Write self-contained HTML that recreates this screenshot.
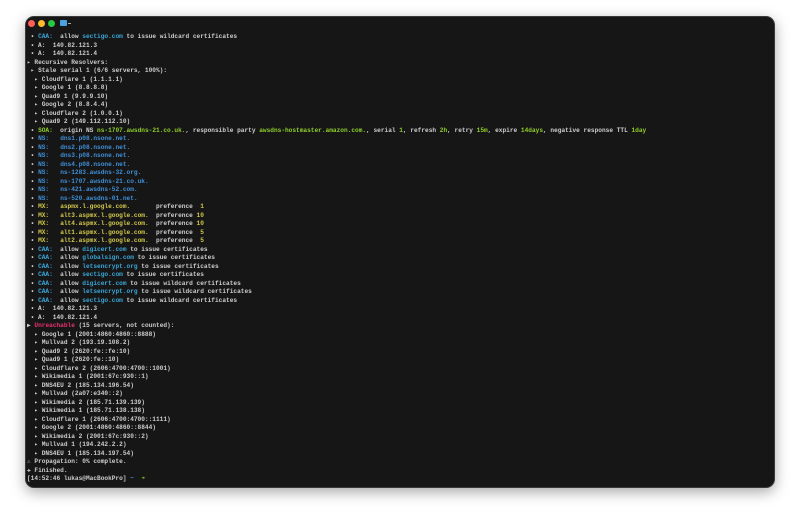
<!DOCTYPE html>
<html><head><meta charset="utf-8"><style>
html,body{margin:0;padding:0;background:#fff;width:800px;height:520px;overflow:hidden}
.win{position:absolute;left:25px;top:16px;width:750px;height:472px;background:#161616;border-radius:9px;box-shadow:0 4px 14px rgba(0,0,0,.35);border:1px solid #3a3a3a;box-sizing:border-box}
.dot{position:absolute;top:3px;width:7px;height:7px;border-radius:50%}
pre{position:absolute;left:1px;top:16px;margin:0;font-family:"Liberation Mono","DejaVu Sans Mono",monospace;font-size:6.15px;line-height:8.5px;color:#cdcdcd;font-weight:bold;white-space:pre}
.b{color:#3f8fd6}.c{color:#3aa6d8}.g{color:#8fcf2a}.y{color:#d2c84a}.p{color:#e8306c}.d{color:#9a9a9a}
</style></head><body>
<div class="win">
<div class="dot" style="left:2px;background:#fe5f57"></div>
<div class="dot" style="left:12px;background:#febc2e"></div>
<div class="dot" style="left:22px;background:#28c840"></div>
<div style="position:absolute;left:34px;top:3px;width:7px;height:6px;background:#4aa3e0;border-radius:1px"></div>
<div style="position:absolute;left:42px;top:6px;width:3px;height:1px;background:#aaa"></div>
<pre> • <span class="c">CAA:</span>  allow <span class="c">sectigo.com</span> to issue wildcard certificates
 • A:  140.82.121.3
 • A:  140.82.121.4
▸ Recursive Resolvers:
 ▸ Stale serial 1 (6/6 servers, 100%):
  ▸ Cloudflare 1 (1.1.1.1)
  ▸ Google 1 (8.8.8.8)
  ▸ Quad9 1 (9.9.9.10)
  ▸ Google 2 (8.8.4.4)
  ▸ Cloudflare 2 (1.0.0.1)
  ▸ Quad9 2 (149.112.112.10)
 • <span class="g">SOA:</span>  origin NS <span class="g">ns-1707.awsdns-21.co.uk.</span>, responsible party <span class="g">awsdns-hostmaster.amazon.com.</span>, serial <span class="g">1</span>, refresh <span class="g">2h</span>, retry <span class="g">15m</span>, expire <span class="g">14days</span>, negative response TTL <span class="g">1day</span>
 • <span class="b">NS:</span>   <span class="b">dns1.p08.nsone.net.</span>
 • <span class="b">NS:</span>   <span class="b">dns2.p08.nsone.net.</span>
 • <span class="b">NS:</span>   <span class="b">dns3.p08.nsone.net.</span>
 • <span class="b">NS:</span>   <span class="b">dns4.p08.nsone.net.</span>
 • <span class="b">NS:</span>   <span class="b">ns-1283.awsdns-32.org.</span>
 • <span class="b">NS:</span>   <span class="b">ns-1707.awsdns-21.co.uk.</span>
 • <span class="b">NS:</span>   <span class="b">ns-421.awsdns-52.com.</span>
 • <span class="b">NS:</span>   <span class="b">ns-520.awsdns-01.net.</span>
 • <span class="y">MX:</span>   <span class="y">aspmx.l.google.com.</span>       preference <span class="y"> 1</span>
 • <span class="y">MX:</span>   <span class="y">alt3.aspmx.l.google.com.</span>  preference <span class="y">10</span>
 • <span class="y">MX:</span>   <span class="y">alt4.aspmx.l.google.com.</span>  preference <span class="y">10</span>
 • <span class="y">MX:</span>   <span class="y">alt1.aspmx.l.google.com.</span>  preference <span class="y"> 5</span>
 • <span class="y">MX:</span>   <span class="y">alt2.aspmx.l.google.com.</span>  preference <span class="y"> 5</span>
 • <span class="c">CAA:</span>  allow <span class="c">digicert.com</span> to issue certificates
 • <span class="c">CAA:</span>  allow <span class="c">globalsign.com</span> to issue certificates
 • <span class="c">CAA:</span>  allow <span class="c">letsencrypt.org</span> to issue certificates
 • <span class="c">CAA:</span>  allow <span class="c">sectigo.com</span> to issue certificates
 • <span class="c">CAA:</span>  allow <span class="c">digicert.com</span> to issue wildcard certificates
 • <span class="c">CAA:</span>  allow <span class="c">letsencrypt.org</span> to issue wildcard certificates
 • <span class="c">CAA:</span>  allow <span class="c">sectigo.com</span> to issue wildcard certificates
 • A:  140.82.121.3
 • A:  140.82.121.4
▶ <span class="p">Unreachable</span> (15 servers, not counted):
  ▸ Google 1 (2001:4860:4860::8888)
  ▸ Mullvad 2 (193.19.108.2)
  ▸ Quad9 2 (2620:fe::fe:10)
  ▸ Quad9 1 (2620:fe::10)
  ▸ Cloudflare 2 (2606:4700:4700::1001)
  ▸ Wikimedia 1 (2001:67c:930::1)
  ▸ DNS4EU 2 (185.134.196.54)
  ▸ Mullvad (2a07:e340::2)
  ▸ Wikimedia 2 (185.71.139.139)
  ▸ Wikimedia 1 (185.71.138.138)
  ▸ Cloudflare 1 (2606:4700:4700::1111)
  ▸ Google 2 (2001:4860:4860::8844)
  ▸ Wikimedia 2 (2001:67c:930::2)
  ▸ Mullvad 1 (194.242.2.2)
  ▸ DNS4EU 1 (185.134.197.54)
<span class="d">⚠</span> Propagation: 0% complete.
✚ Finished.
[14:52:46 lukas@MacBookPro] <span class="b">~</span>  <span class="g">➜</span></pre>
</div>
</body></html>
